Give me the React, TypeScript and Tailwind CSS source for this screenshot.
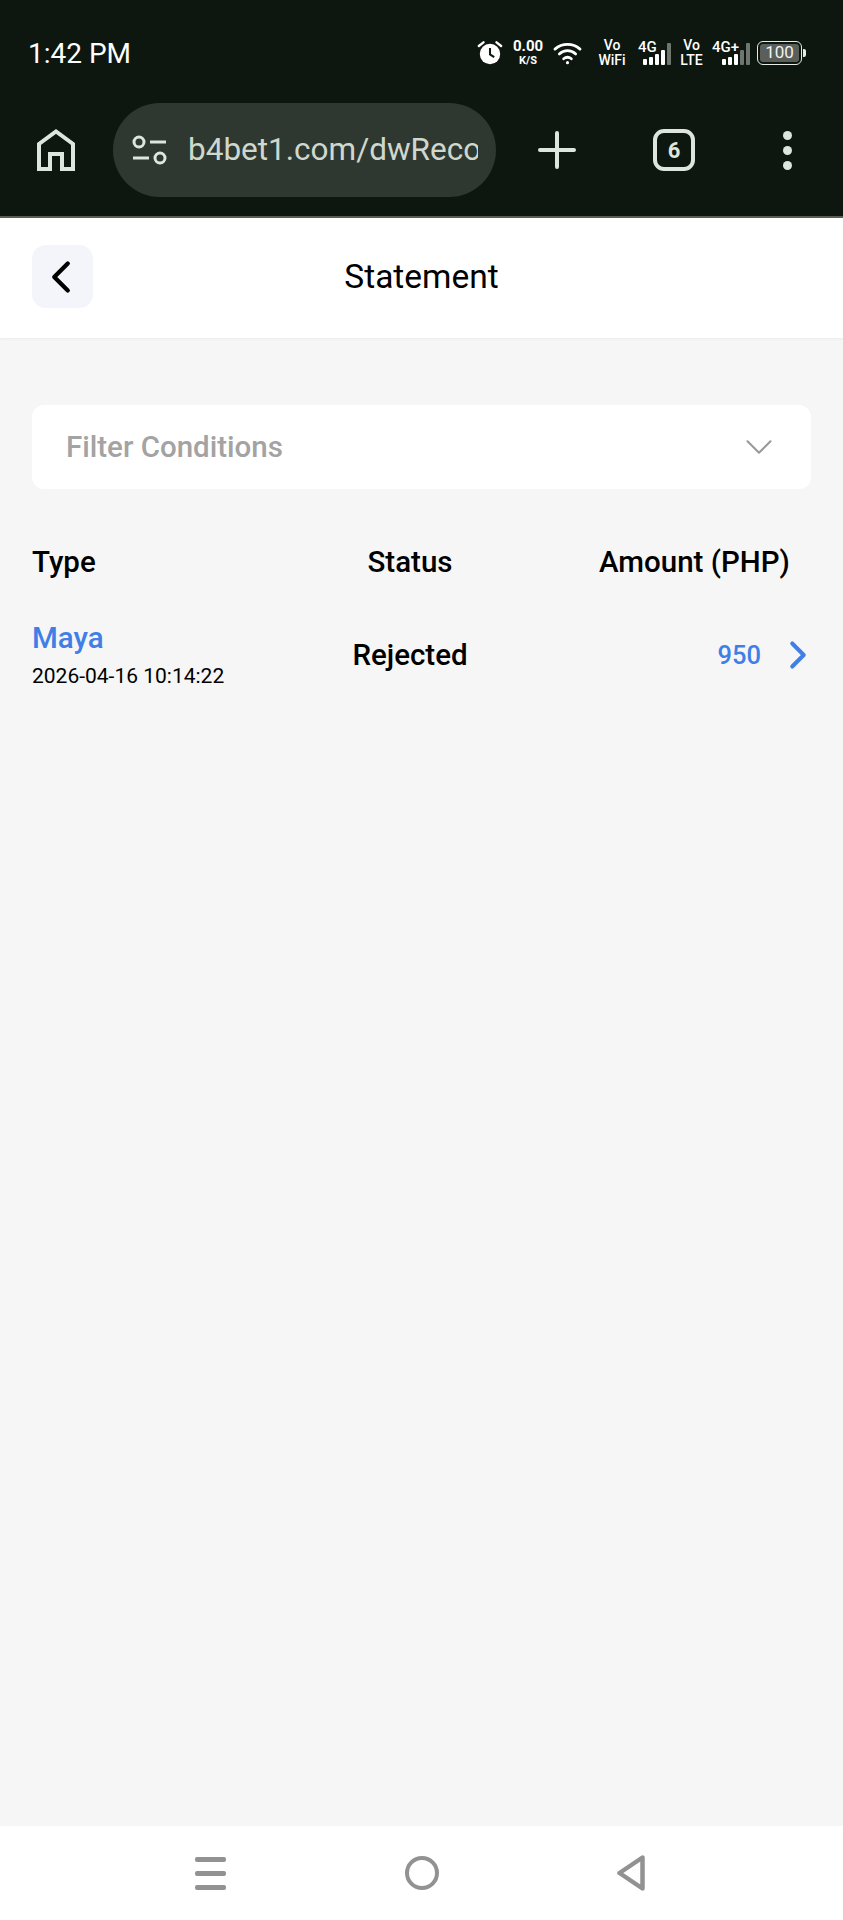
import { ChevronLeft, ChevronRight, ChevronDown } from "lucide-react";

function Signal({ lit }: { lit: number }) {
  const heights = [6, 8, 11, 15, 22];
  return (
    <div className="flex items-end gap-[2px]">
      {heights.map((h, i) => (
        <div
          key={i}
          className={i < lit ? "w-[4px] rounded-[1px] bg-white" : "w-[4px] rounded-[1px] bg-[#6f766f]"}
          style={{ height: h }}
        />
      ))}
    </div>
  );
}

function StatusIcons() {
  return (
    <div className="flex items-center text-white font-bold leading-none">
      <svg width="26" height="26" viewBox="0 0 28 28" className="mr-[10px]">
        <circle cx="14" cy="15" r="11" fill="#fff" />
        <path d="M14 8.5V15.5L18.5 18.5" stroke="#0d1710" strokeWidth="2.2" fill="none" />
        <path d="M2 6.5L7 2.5M26 6.5L21 2.5" stroke="#fff" strokeWidth="2.6" strokeLinecap="round" />
      </svg>
      <div className="flex flex-col items-center w-[30px] mr-[10px]">
        <span className="text-[15px]">0.00</span>
        <span className="text-[11px] mt-[1px]">K/S</span>
      </div>
      <svg width="29" height="26" viewBox="0 0 30 26" fill="none" stroke="#fff" strokeWidth="2.8" strokeLinecap="round" className="mr-[16px]">
        <path d="M2 9C9.5 2.5 20.5 2.5 28 9" />
        <path d="M6.5 14C11.5 9.5 18.5 9.5 23.5 14" />
        <path d="M11 19C13.5 17 16.5 17 19 19" />
        <circle cx="15" cy="23" r="1.6" fill="#fff" stroke="none" />
      </svg>
      <div className="flex flex-col items-center text-[14px] font-medium w-[28px] mr-[12px] gap-[1px]">
        <span>Vo</span>
        <span>WiFi</span>
      </div>
      <div className="relative w-[33px] h-[24px] mr-[9px]">
        <span className="absolute left-0 -top-[1px] text-[15px] font-medium">4G</span>
        <div className="absolute right-0 bottom-0">
          <Signal lit={4} />
        </div>
      </div>
      <div className="flex flex-col items-center text-[14px] font-medium w-[23px] mr-[9px] gap-[1px]">
        <span>Vo</span>
        <span>LTE</span>
      </div>
      <div className="relative w-[38px] h-[24px] mr-[7px]">
        <span className="absolute left-0 -top-[1px] text-[15px] font-medium">4G+</span>
        <div className="absolute right-0 bottom-0">
          <Signal lit={3} />
        </div>
      </div>
      <div className="w-[45px] h-[24px] rounded-[6px] border-[1.5px] border-[#e8e8e8] p-[2px]">
        <div className="w-full h-full rounded-[3px] bg-[#5a5f5b] flex items-center justify-center font-normal text-[17px] text-[#f2f2f2]">
          100
        </div>
      </div>
      <div className="w-[3px] h-[8px] ml-[1px] rounded-r-[2px] bg-[#e8e8e8]" />
    </div>
  );
}

function BrowserBar() {
  return (
    <div className="h-[122px] border-b-2 border-[#59604f] flex items-start pl-[37px] pt-[7px] text-[#dde5dc]">
      <svg width="38" height="42" viewBox="0 0 38 42" fill="none" stroke="#dde5dc" strokeWidth="4" className="mt-[26px] mr-[38px] shrink-0">
        <path d="M2 40V15L19 2.5L36 15V40H25V25H13V40Z" />
      </svg>
      <div className="w-[383px] h-[94px] rounded-full bg-[#2f3830] flex items-center pl-[19px] shrink-0">
        <svg width="36" height="30" viewBox="0 0 36 30" fill="none" stroke="#dde5dc" strokeWidth="3" className="shrink-0 mr-[20px]">
          <circle cx="7" cy="7" r="5" />
          <path d="M18 7H34M1 23H17" />
          <circle cx="28" cy="23" r="5" />
        </svg>
        <div className="w-[290px] overflow-hidden whitespace-nowrap text-[31.5px] text-[#cfd8ce] font-['Roboto',sans-serif]">
          b4bet1.com/dwRecord
        </div>
      </div>
      <svg width="38" height="38" viewBox="0 0 38 38" fill="none" stroke="#dde5dc" strokeWidth="4" strokeLinecap="round" className="ml-[42px] mt-[28px] shrink-0">
        <path d="M19 2V36M2 19H36" />
      </svg>
      <div className="w-[42px] h-[42px] ml-[77px] mt-[26px] shrink-0 rounded-[11px] border-[4px] border-[#dde5dc] flex items-center justify-center text-[22px] font-bold font-['Roboto',sans-serif]">
        6
      </div>
      <div className="ml-[88px] mt-[28px] flex flex-col gap-[6px] shrink-0">
        <div className="w-[9px] h-[9px] rounded-full bg-[#dde5dc]" />
        <div className="w-[9px] h-[9px] rounded-full bg-[#dde5dc]" />
        <div className="w-[9px] h-[9px] rounded-full bg-[#dde5dc]" />
      </div>
    </div>
  );
}

function NavBar() {
  return (
    <div className="h-[94px] shrink-0 bg-white flex items-start pt-[30px]">
      <div className="w-[31px] ml-[195px] mt-[1px] flex flex-col gap-[9px]">
        <div className="h-[5px] rounded-[2px] bg-[#929292]" />
        <div className="h-[5px] rounded-[2px] bg-[#929292]" />
        <div className="h-[5px] rounded-[2px] bg-[#929292]" />
      </div>
      <div className="w-[34px] h-[34px] ml-[179px] rounded-full border-[4.5px] border-[#929292]" />
      <svg width="28" height="36" viewBox="0 0 28 36" fill="none" stroke="#929292" strokeWidth="4.5" strokeLinejoin="round" className="ml-[178px] -mt-[1px]">
        <path d="M25.5 2.5V33.5L2.5 18Z" />
      </svg>
    </div>
  );
}

export default function App() {
  return (
    <div className="w-[843px] h-[1920px] flex flex-col bg-[#f6f6f6] font-['Roboto',sans-serif] overflow-hidden">
      <div className="h-[218px] shrink-0 bg-[#0d1710] flex flex-col">
        <div className="h-[96px] pl-[28px] pr-[37px] flex items-center justify-between pt-[9px]">
          <span className="text-[28px] text-white mt-[2px]">1:42 PM</span>
          <StatusIcons />
        </div>
        <BrowserBar />
      </div>

      <div className="h-[120px] shrink-0 bg-white shadow-[0_1px_3px_rgba(0,0,0,0.05)] relative flex items-center justify-center pb-[2px]">
        <span className="text-[33.5px] text-black">Statement</span>
        <div className="absolute left-[32px] top-[27px] w-[61px] h-[63px] rounded-[14px] bg-[#f4f5fa] flex items-center justify-center">
          <ChevronLeft size={54} strokeWidth={1.9} className="text-black -ml-[3px]" />
        </div>
      </div>

      <div className="flex-1 px-[32px] pt-[67px]">
        <div className="h-[84px] rounded-[12px] bg-white pl-[34px] pr-[29px] flex items-center justify-between">
          <span className="text-[29.5px] font-medium text-[#a3a3a3]">Filter Conditions</span>
          <ChevronDown size={46} strokeWidth={1.1} className="text-[#9a9a9a]" />
        </div>

        <div className="mt-[51px] flex items-center text-[29.5px] font-medium text-black">
          <span className="w-[303px]">Type</span>
          <span className="w-[150px] text-center">Status</span>
          <span className="ml-[114px] whitespace-nowrap">Amount (PHP)</span>
        </div>

        <div className="mt-[36px] flex items-center">
          <div className="w-[280px]">
            <div className="text-[29.5px] font-medium text-[#3f7fe6] leading-[36px]">Maya</div>
            <div className="text-[21px] text-black leading-[28px] mt-[6px]">2026-04-16 10:14:22</div>
          </div>
          <span className="w-[196px] text-center text-[29.5px] font-medium text-black">Rejected</span>
          <span className="flex-1 text-right text-[25.5px] font-medium text-[#3f7fe6]">950</span>
          <ChevronRight size={46} strokeWidth={2.1} className="text-[#3f7fe6] ml-[14px] -mr-[10px]" />
        </div>
      </div>

      <NavBar />
    </div>
  );
}
